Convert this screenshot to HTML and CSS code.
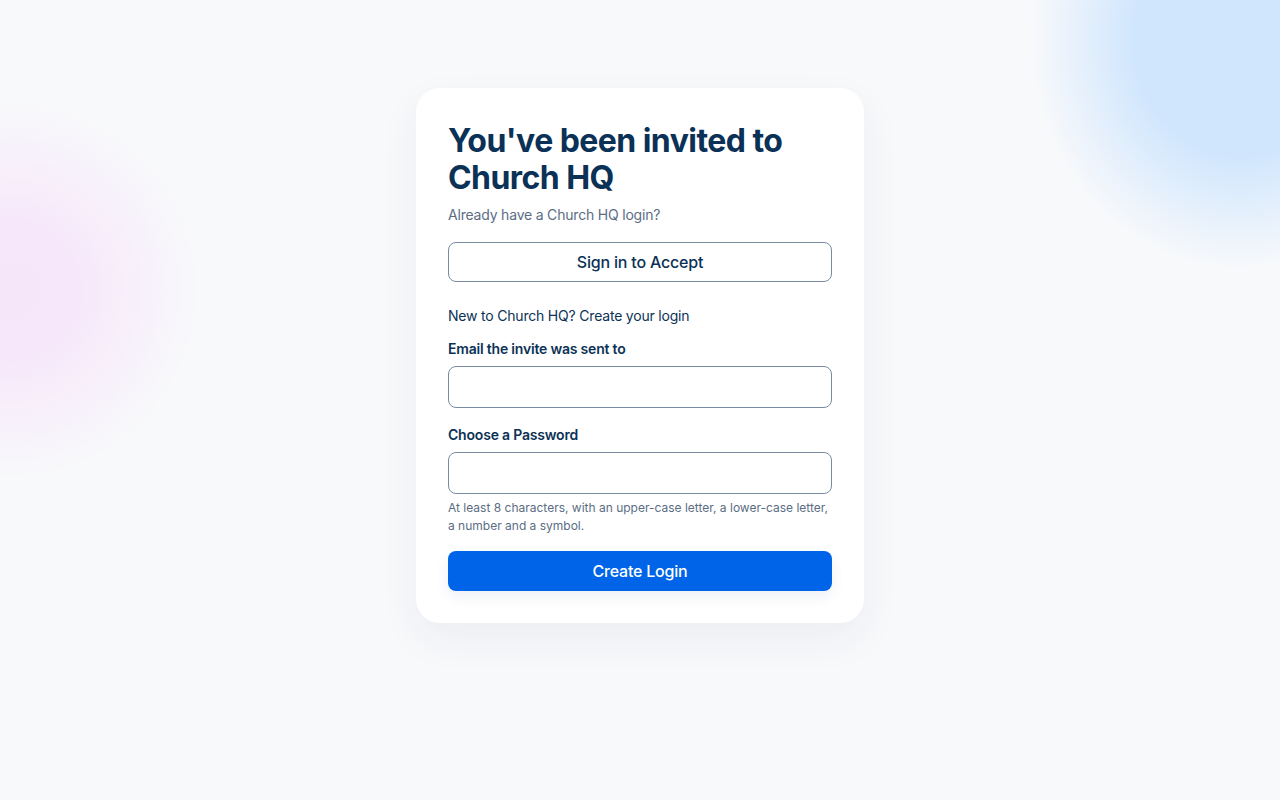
FILE: index.html
```html
<!DOCTYPE html>
<html lang="en">
<head>
<meta charset="utf-8">
<title>Church HQ Invite</title>
<link rel="stylesheet" href="styles.css">
</head>
<body>
<main class="page">
  <section class="card">
    <h1 class="title">You've been invited to Church HQ</h1>
    <p class="subtitle">Already have a Church HQ login?</p>
    <button class="btn btn-outline" type="button">Sign in to Accept</button>
    <p class="section-text">New to Church HQ? Create your login</p>
    <form class="form">
      <label class="label" for="email">Email the invite was sent to</label>
      <input class="input" id="email" type="email">
      <label class="label label-second" for="pw">Choose a Password</label>
      <input class="input" id="pw" type="password">
      <p class="hint">At least 8 characters, with an upper-case letter, a lower-case letter, a number and a symbol.</p>
      <button class="btn btn-primary" type="button">Create Login</button>
    </form>
  </section>
</main>
</body>
</html>
```

FILE: styles.css
```css
* { box-sizing: border-box; }
html, body { margin: 0; padding: 0; }
body {
  background-color: #f8f9fb;
  background-image:
    radial-gradient(ellipse 210px 230px at 1240px 40px, rgba(208, 230, 253, 1) 0%, rgba(208, 230, 253, 1) 50%, rgba(208, 230, 253, 0) 100%),
    radial-gradient(ellipse 190px 190px at 10px 290px, rgba(246, 230, 250, 1) 0%, rgba(246, 230, 250, 0.9) 35%, rgba(246, 230, 250, 0) 100%);
  background-repeat: no-repeat;
  font-family: "Inter", "Noto Sans", sans-serif;
  color: #0c2f52;
  width: 1280px;
  height: 800px;
  overflow: hidden;
}
.page {
  display: flex;
  justify-content: center;
  padding-top: 88px;
}
.card {
  width: 448px;
  background: #ffffff;
  border-radius: 24px;
  padding: 32px;
  box-shadow: 0 16px 40px rgba(30, 50, 90, 0.06);
  display: flex;
  flex-direction: column;
}
.title {
  margin: 2px 0 0;
  font-size: 32px;
  font-weight: 700;
  line-height: 37px;
  letter-spacing: -0.55px;
  color: #0b3256;
}
.subtitle {
  margin: 7px 0 0;
  font-size: 14px;
  line-height: 24px;
  color: #5b6d84;
  font-weight: 400;
  letter-spacing: -0.2px;
}
.btn {
  display: block;
  width: 100%;
  height: 40px;
  border-radius: 8px;
  font-family: inherit;
  font-size: 16px;
  font-weight: 500;
  letter-spacing: -0.2px;
  cursor: pointer;
}
.btn-outline {
  margin-top: 15px;
  background: #ffffff;
  border: 1px solid #7a8ca3;
  color: #0b3256;
}
.section-text {
  margin: 24px 0 0;
  font-size: 14px;
  line-height: 20px;
  color: #0b3256;
  letter-spacing: -0.2px;
}
.form {
  display: flex;
  flex-direction: column;
  margin: 0;
}
.label {
  margin-top: 13px;
  font-size: 14px;
  line-height: 20px;
  font-weight: 600;
  color: #0b3256;
  letter-spacing: -0.2px;
}
.label-second { margin-top: 17px; }
.input {
  margin-top: 7px;
  height: 42px;
  width: 100%;
  border: 1px solid #7a8ca3;
  border-radius: 8px;
  background: #ffffff;
  font-family: inherit;
  font-size: 14px;
  padding: 0 12px;
}
.hint {
  margin: 5px 0 0;
  font-size: 12px;
  line-height: 18px;
  color: #5b6d84;
  letter-spacing: 0;
}
.btn-primary {
  margin-top: 16px;
  background: #0064e8;
  border: none;
  color: #ffffff;
  box-shadow: 0 6px 14px rgba(0, 60, 140, 0.08);
}
```
